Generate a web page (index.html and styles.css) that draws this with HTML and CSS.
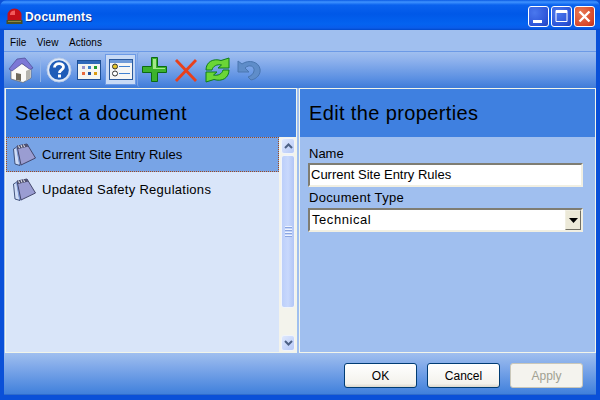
FILE: index.html
```html
<!DOCTYPE html>
<html lang="en">
<head>
<meta charset="utf-8">
<title>Documents</title>
<link rel="stylesheet" href="styles.css">
</head>
<body>
<svg class="defs" width="0" height="0" aria-hidden="true">
  <defs>
    <symbol id="note" viewBox="0 0 24 24">
      <path d="M1.500 6 L3 21 L8 22.500 L5 4 Z" fill="#cfdcf6" stroke="#33456f" stroke-width=".9"/>
      <path d="M4 4 L7 21 L9.500 22.500 L6 4 Z" fill="#7f9ad8"/>
      <path d="M5 3 L15 1 L23.500 15 L9 22 Z" fill="#9a9dd2" stroke="#3a3c60" stroke-width=".9"/>
      <path d="M5 3 L15 1 L16.500 3.500 L6 6 Z" fill="#4e5070"/>
      <path d="M6.500 2.500 L7.500 5 M9 2 L10 4.500 M11.500 1.500 L12.500 4" stroke="#fff" stroke-width=".9"/>
    </symbol>
  </defs>
</svg>
<div class="window">
  <header class="titlebar">
    <svg class="app-icon" width="17" height="17" viewBox="0 0 17 17">
      <path d="M1.500 12.500 V7 a7 6.500 0 0 1 14 0 V12.500 Z" fill="#c40f18"/>
      <path d="M4 6 a4.500 4 0 0 1 5 -3.500 L9 7 H4 Z" fill="#f25a5a"/>
      <path d="M.5 12 H16.500 V16 H.5 Z" fill="#4a4f24"/>
      <path d="M2 13 H15 V14 H2 Z" fill="#8a8a48"/>
    </svg>
    <span class="title">Documents</span>
    <div class="caption">
      <div class="cap cap-blue">
        <svg width="21" height="21" viewBox="0 0 21 21"><rect x="5" y="14" width="9" height="3" fill="#fff"/></svg>
      </div>
      <div class="cap cap-blue">
        <svg width="21" height="21" viewBox="0 0 21 21"><path d="M5 4.500 H16 V15.500 H5 Z" fill="none" stroke="#fff"/><rect x="5" y="4" width="11" height="3" fill="#fff"/></svg>
      </div>
      <div class="cap cap-red">
        <svg width="21" height="21" viewBox="0 0 21 21"><path d="M5.500 5.500 L15.500 15.500 M15.500 5.500 L5.500 15.500" stroke="#fff" stroke-width="2.400"/></svg>
      </div>
    </div>
  </header>
  <div class="client">
    <nav class="menubar">
      <span>File</span><span>View</span><span>Actions</span>
    </nav>
    <div class="toolbar">
      <div class="tool-group">
        <div class="tool tool-home">
          <svg width="26" height="26" viewBox="0 0 26 26">
            <path d="M3 13 L3 22 L15 25.500 L23 21 V12 L13 6 Z" fill="#fafaf8" stroke="#666" stroke-width=".7"/>
            <path d="M1 12 L9 2 L17 1 L25 11 L22 12.500 L14 6.500 L4 14 Z" fill="#7c78d6" stroke="#4a4a90" stroke-width=".7"/>
            <path d="M18 14 L22 12 V21 L18 24 Z" fill="#b4b4ae"/>
            <path d="M8 16 L13 17 V24 L8 23 Z" fill="#6f6a5c"/>
          </svg>
        </div>
        <div class="sep"></div>
        <div class="tool tool-help">
          <svg width="26" height="26" viewBox="0 0 26 26">
            <circle cx="13" cy="13" r="12" fill="#dfe9f8" stroke="#b8cbe8"/>
            <circle cx="13" cy="13" r="9.800" fill="#1f5cb8"/>
            <path d="M8.500 10.500 C8.500 5.500 17.500 5.500 17.500 10 C17.500 13 13.500 12.800 13.500 16" fill="none" stroke="#fff" stroke-width="2.800"/>
            <rect x="12" y="17.500" width="3" height="3" fill="#fff"/>
          </svg>
        </div>
        <div class="tool tool-grid">
          <svg width="24" height="20" viewBox="0 0 24 20">
            <rect x=".5" y=".5" width="23" height="19" fill="#f5f5f0" stroke="#1d4f96"/>
            <rect x="1" y="1" width="22" height="3" fill="#2f69ba"/>
            <rect x="5" y="6" width="3" height="3" fill="#9a94cc"/><rect x="11" y="6" width="3" height="3" fill="#3b7fcb"/><rect x="17" y="6" width="3" height="3" fill="#1f9a2e"/>
            <rect x="5" y="12" width="3" height="3" fill="#e86a3c"/><rect x="11" y="12" width="3" height="3" fill="#1f4f9a"/><rect x="17" y="12" width="3" height="3" fill="#d99a10"/>
          </svg>
        </div>
        <div class="tool tool-active">
          <svg width="24" height="21" viewBox="0 0 24 21">
            <rect x=".5" y=".5" width="23" height="20" fill="#f5f5f5" stroke="#2a5a9e"/>
            <rect x="1" y="1" width="22" height="3" fill="#6f9ad8"/>
            <circle cx="6" cy="7.500" r="2.500" fill="#e3c52a" stroke="#333"/>
            <circle cx="6" cy="14.500" r="2.500" fill="#fff" stroke="#333"/>
            <path d="M10 7.500 H21 M10 14.500 H21" stroke="#3f7fd0" stroke-width="1.200"/>
          </svg>
        </div>
      </div>
      <div class="tool-group tool-group-b">
        <div class="tool tool-add">
          <svg width="25" height="25" viewBox="0 0 25 25">
            <path d="M9.500 .5 H15.500 V9.500 H24.500 V15.500 H15.500 V24.500 H9.500 V15.500 H.5 V9.500 H9.500 Z" fill="#3cb22c" stroke="#0d6b12"/>
            <path d="M11 2 H14 V11 H23 V12 H11 Z" fill="#a4e88a"/>
          </svg>
        </div>
        <div class="tool tool-del">
          <svg width="24" height="24" viewBox="0 0 24 24"><path d="M2 2 L22 23 M22 2 L2 23" stroke="#e8401c" stroke-width="2.800"/></svg>
        </div>
        <div class="tool tool-refresh">
          <svg width="25" height="26" viewBox="0 0 25 26">
            <path d="M1 13 C1 5 8 1 16 3.500 L24 1 V11 L13 11 L16.500 8 C12 7 8 9 7 13 Z" fill="#6bd637" stroke="#0f7d19"/>
            <path d="M24 13 C24 21 17 25 9 22.500 L1 25 V15 L12 15 L8.500 18 C13 19 17 17 18 13 Z" fill="#6bd637" stroke="#0f7d19"/>
          </svg>
        </div>
        <div class="tool tool-off">
          <svg width="25" height="22" viewBox="0 0 25 22">
            <path d="M2 2 L2 13 L13 13 L9 9 C13 5 19 7 18 12 C17.500 15 15 17 12 18 L15 21 C21 20 25 15 24 10 C23 3 13 0 6 5 Z" fill="#5f8dc9" stroke="#4a76b0"/>
          </svg>
        </div>
      </div>
    </div>
    <main class="panes">
      <section class="pane">
        <h2 class="pane-head">Select a document</h2>
        <div class="list-wrap">
          <ul class="list">
            <li class="item item-sel"><svg class="note" width="24" height="24"><use href="#note"/></svg>Current Site Entry Rules</li>
            <li class="item item-wide"><svg class="note" width="24" height="24"><use href="#note"/></svg>Updated Safety Regulations</li>
          </ul>
          <div class="scrollbar">
            <div class="sb-btn">
              <svg width="9" height="6" viewBox="0 0 9 6"><path d="M1 5 L4.500 1.500 L8 5" fill="none" stroke="#4d6185" stroke-width="2"/></svg>
            </div>
            <div class="sb-thumb">
              <div class="grip"></div><div class="grip"></div><div class="grip"></div><div class="grip"></div>
            </div>
            <div class="sb-track"></div>
            <div class="sb-btn">
              <svg width="9" height="6" viewBox="0 0 9 6"><path d="M1 1 L4.500 4.500 L8 1" fill="none" stroke="#4d6185" stroke-width="2"/></svg>
            </div>
          </div>
        </div>
      </section>
      <section class="pane pane-right">
        <h2 class="pane-head">Edit the properties</h2>
        <form class="props">
          <label class="lbl">Name</label>
          <div class="field">Current Site Entry Rules</div>
          <label class="lbl lbl-2">Document Type</label>
          <div class="field field-select">
            <span class="sel-text">Technical</span>
            <span class="sel-btn"><svg width="9" height="5" viewBox="0 0 9 5"><path d="M0 0 H9 L4.500 5 Z" fill="#000"/></svg></span>
          </div>
        </form>
      </section>
    </main>
    <footer class="footer">
      <button class="btn" type="button">OK</button>
      <button class="btn" type="button">Cancel</button>
      <button class="btn btn-off" type="button">Apply</button>
    </footer>
  </div>
</div>
</body>
</html>
```
FILE: styles.css
```css
* { box-sizing: border-box; }
html, body { margin: 0; padding: 0; }
body { width: 600px; height: 400px; overflow: hidden; font-family: "Liberation Sans", Arial, sans-serif; font-size: 13px; color: #000; }
.defs { position: absolute; }
.window { width: 600px; height: 400px; display: flex; flex-direction: column; background: #0a50d8; }
.titlebar { height: 30px; flex: none; display: flex; align-items: center; padding: 3px 5px 0 6px; border-radius: 7px 7px 0 0;
  background: linear-gradient(180deg, #0a5ae4 0, #3f93ff 2px, #0a62ee 5px, #0058e8 14px, #0463f0 24px, #0a5cea 28px, #0248c8 30px); }
.app-icon { margin: 0 2px 1px 0; flex: none; }
.title { color: #fff; font-weight: 700; font-size: 12px; letter-spacing: .2px; text-shadow: 1px 1px 0 #0a2f90; flex: 1; }
.caption { display: flex; gap: 2px; }
.cap { width: 21px; height: 21px; border: 1px solid #fff; border-radius: 3px; display: flex; overflow: hidden; }
.cap svg { flex: none; margin: -1px; }
.cap-blue { background: radial-gradient(circle at 30% 30%, #4a78ee, #2c54d8 70%, #2240b8); }
.cap-red { background: radial-gradient(circle at 30% 30%, #e87a55, #d8482a 70%, #b8301c); }
.client { flex: 1; min-height: 0; margin: 0 4px 5px 4px; display: flex; flex-direction: column; background: #a0bfef; border-bottom: 1px solid #2f6bcc; }
.menubar { height: 22px; flex: none; display: flex; align-items: center; padding: 3px 0 0 6px; gap: 10.500px; font-size: 10px; letter-spacing: .04px; background: #a0bfef; border-bottom: 1px solid #6c9ae6; }
.toolbar { height: 36px; flex: none; display: flex; background: linear-gradient(180deg, #a0bfef 0, #8cb0ec 25%, #5a8fe2 75%, #3f7bd8 100%); }
.tool-group { display: flex; align-items: center; height: 35px; padding-left: 3px; }
.tool-group-b { border-left: 1px solid #7ca4e6; border-radius: 3px 0 0 3px; padding-left: 1px; margin-left: 1px; }
.tool { height: 31px; width: 31px; flex: none; display: flex; align-items: center; justify-content: center; }
.tool-home { width: 27px; }
.sep { width: 1px; height: 25px; background: #8fb3ea; margin: 0 1px 0 6px; }
.tool-help { width: 33px; }
.tool-grid { width: 27px; }
.tool-active { background: #c8daf5; border: 1px solid #6c9ae6; margin-left: 3px; }
.tool-refresh { width: 32px; }
.tool-off { width: 30px; }
.panes { flex: 1; min-height: 0; display: grid; grid-template-columns: 292px 297px; gap: 2px; padding: 0 0 0 1px; }
.pane { border: 1px solid #f2f5ea; background: #d9e5f9; display: flex; flex-direction: column; min-height: 0; }
.pane-right { background: #a0bfef; }
.pane-head { margin: 0; height: 48px; flex: none; background: #3f80e0; font-weight: 400; font-size: 20px; letter-spacing: .37px; line-height: 48px; padding-left: 9px; color: #000; }
.list-wrap { flex: 1; min-height: 0; display: flex; }
.list { list-style: none; margin: 0; padding: 0; flex: 1; }
.item { height: 35px; display: flex; align-items: center; padding-left: 6px; gap: 6px; }
.item-wide { letter-spacing: .28px; }
.item-sel { background: #78a4e6; border: 1px dotted #a04a1e; padding-left: 5px; }
.note { flex: none; }
.scrollbar { width: 17px; flex: none; display: flex; flex-direction: column; padding: 1px 1px 1px 2px; background: #f3f3ec; }
.sb-btn { height: 16px; flex: none; border: 1px solid #f0f4fb; border-radius: 3px; background: linear-gradient(135deg, #dfe8fd, #b6c9f8); display: flex; align-items: center; justify-content: center; }
.sb-thumb { height: 153px; flex: none; margin-top: 1px; border: 1px solid #f0f4fb; border-radius: 3px; background: linear-gradient(90deg, #bccffa, #c8d8fc 50%, #b2c6f6); display: flex; flex-direction: column; align-items: center; justify-content: center; gap: 1px; }
.grip { width: 7px; height: 1px; background: #eef3fe; box-shadow: 0 1px 0 #8ca6e0; margin-bottom: 1px; }
.sb-track { flex: 1; }
.props { flex: 1; padding: 8px 12px 0 8px; display: flex; flex-direction: column; }
.lbl { display: block; height: 18px; line-height: 18px; padding-left: 1px; }
.lbl-2 { height: 21px; line-height: 22px; letter-spacing: .33px; }
.field { height: 24px; flex: none; background: #fff; border: 2px solid; border-color: #7f7d73 #f1efe2 #f1efe2 #7f7d73; line-height: 20px; padding-left: 1px; display: flex; align-items: center; }
.field-select { justify-content: space-between; padding-left: 2px; }
.sel-text { flex: 1; letter-spacing: .55px; }
.sel-btn { width: 16px; height: 20px; background: #ece9d8; border: 1px solid; border-color: #f1efe2 #716f64 #716f64 #f1efe2; display: flex; align-items: center; justify-content: center; }
.footer { height: 41px; flex: none; display: flex; justify-content: flex-end; align-items: flex-start; gap: 10px; padding: 10px 13px 0 0; background: linear-gradient(180deg, #a0bfef 0, #7aa5e8 40%, #4080dc 100%); }
.btn { width: 73px; height: 25px; border: 1px solid #003c74; border-radius: 3px; background: linear-gradient(180deg, #fff, #f3f2ec 85%, #dcd8cc); font: 12px "Liberation Sans", Arial, sans-serif; color: #000; padding: 0; }
.btn-off { border-color: #c9c7ba; background: #f4f3ee; color: #a1a192; }
```
